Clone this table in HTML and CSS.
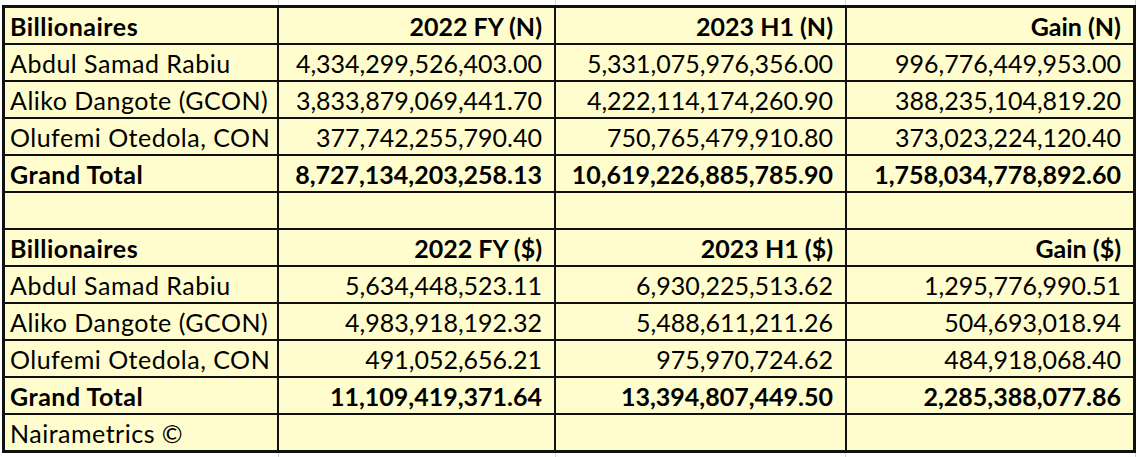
FILE: index.html
```html
<!DOCTYPE html>
<html>
<head>
<meta charset="utf-8">
<link rel="stylesheet" href="styles.css">
</head>
<body>
<div class="sheet">
  <div class="c t b">Billionaires</div><div class="c r b">2022 FY (N)</div><div class="c r b">2023 H1 (N)</div><div class="c r b">Gain (N)</div>
  <div class="c t">Abdul Samad Rabiu</div><div class="c r">4,334,299,526,403.00</div><div class="c r">5,331,075,976,356.00</div><div class="c r">996,776,449,953.00</div>
  <div class="c t">Aliko Dangote (GCON)</div><div class="c r">3,833,879,069,441.70</div><div class="c r">4,222,114,174,260.90</div><div class="c r">388,235,104,819.20</div>
  <div class="c t">Olufemi Otedola, CON</div><div class="c r">377,742,255,790.40</div><div class="c r">750,765,479,910.80</div><div class="c r">373,023,224,120.40</div>
  <div class="c t b">Grand Total</div><div class="c r b">8,727,134,203,258.13</div><div class="c r b">10,619,226,885,785.90</div><div class="c r b">1,758,034,778,892.60</div>
  <div class="c"></div><div class="c"></div><div class="c"></div><div class="c"></div>
  <div class="c t b">Billionaires</div><div class="c r b">2022 FY ($)</div><div class="c r b">2023 H1 ($)</div><div class="c r b">Gain ($)</div>
  <div class="c t">Abdul Samad Rabiu</div><div class="c r">5,634,448,523.11</div><div class="c r">6,930,225,513.62</div><div class="c r">1,295,776,990.51</div>
  <div class="c t">Aliko Dangote (GCON)</div><div class="c r">4,983,918,192.32</div><div class="c r">5,488,611,211.26</div><div class="c r">504,693,018.94</div>
  <div class="c t">Olufemi Otedola, CON</div><div class="c r">491,052,656.21</div><div class="c r">975,970,724.62</div><div class="c r">484,918,068.40</div>
  <div class="c t b">Grand Total</div><div class="c r b">11,109,419,371.64</div><div class="c r b">13,394,807,449.50</div><div class="c r b">2,285,388,077.86</div>
  <div class="c t">Nairametrics ©</div><div class="c"></div><div class="c"></div><div class="c"></div>
</div>
</body>
</html>
```
FILE: styles.css
```css
html, body {
  margin: 0;
  padding: 0;
}
body {
  width: 1140px;
  height: 457px;
  overflow: hidden;
  background-color: #ffffff;
  background-image:
    linear-gradient(#d6d6d6, #d6d6d6),
    linear-gradient(#d6d6d6, #d6d6d6),
    linear-gradient(#d6d6d6, #d6d6d6),
    linear-gradient(#d6d6d6, #d6d6d6);
  background-size: 1px 100%;
  background-position: 278px 0, 555px 0, 845px 0, 1135px 0;
  background-repeat: no-repeat;
  font-family: Lato, "Liberation Sans", sans-serif;
}
.sheet {
  display: grid;
  grid-template-columns: 272px 275px 289px 286px;
  grid-auto-rows: 35px;
  gap: 2px;
  padding: 3px;
  margin: 5px 0 0 2px;
  width: max-content;
  background: #111111;
}
.c {
  background: #fffccd;
  color: #000;
  font-size: 25px;
  line-height: 1;
  display: flex;
  align-items: center;
  padding: 2px 12px 0 5px;
  white-space: nowrap;
}
.t {
  letter-spacing: 0.5px;
}
.r {
  justify-content: flex-end;
}
.b {
  font-weight: 700;
}
```
